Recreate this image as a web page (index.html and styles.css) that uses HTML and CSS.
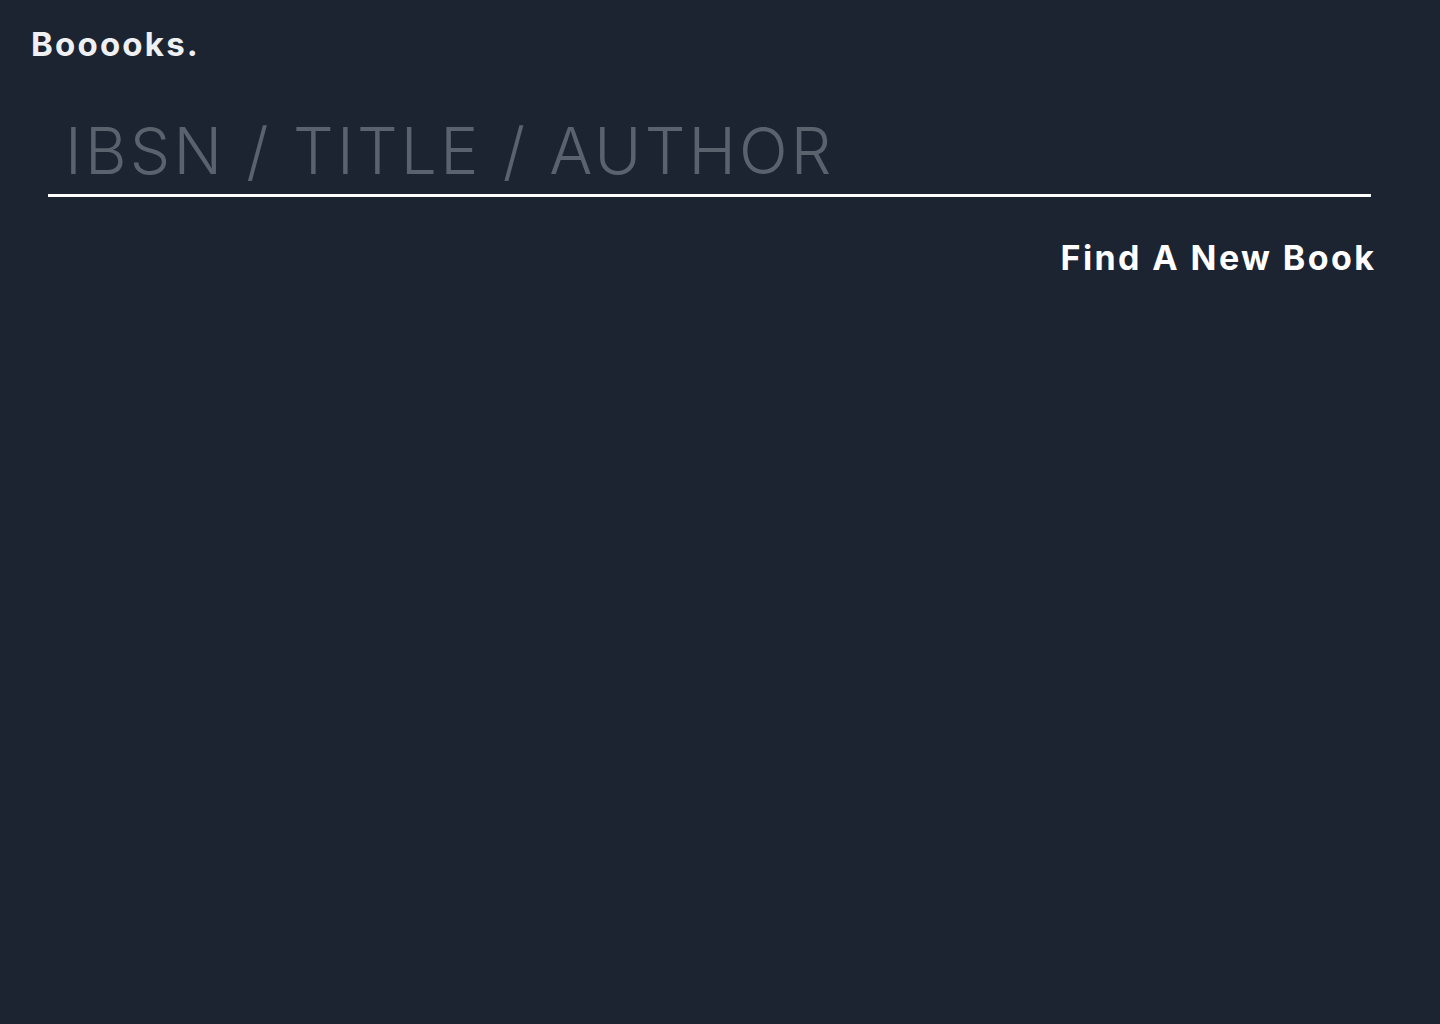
FILE: index.html
```html
<!DOCTYPE html>
<html>
<head>
<meta charset="utf-8">
<link rel="stylesheet" href="styles.css">
</head>
<body>
<header class="header">
  <div class="logo">Booooks.</div>
</header>
<main class="main">
  <div class="search">
    <input class="search-input" type="text" placeholder="IBSN / TITLE / AUTHOR">
  </div>
  <div class="actions">
    <button class="find-btn">Find A New Book</button>
  </div>
</main>
</body>
</html>
```
FILE: styles.css
```css
html, body {
  margin: 0;
  padding: 0;
  height: 100%;
}
body {
  background: #1c2431;
  font-family: "Inter", "Liberation Sans", sans-serif;
  color: #ffffff;
}
.header {
  padding: 24px 31px 0;
}
.logo {
  font-size: 33px;
  font-weight: 700;
  letter-spacing: 2.2px;
  color: #eef0f3;
  line-height: 40px;
}
.main {
  padding: 49px 69px 0 48px;
}
.search {
  border-bottom: 3px solid #ffffff;
}
.search-input {
  display: block;
  width: 100%;
  box-sizing: border-box;
  background: transparent;
  border: none;
  outline: none;
  padding: 0 0 5px 17px;
  font-family: "Inter", "Liberation Sans", sans-serif;
  font-size: 64px;
  font-weight: 300;
  letter-spacing: 3.2px;
  line-height: 76px;
  color: #59626d;
}
.search-input::placeholder {
  color: #59626d;
  opacity: 1;
}
.actions {
  display: flex;
  justify-content: flex-end;
  margin-right: -3px;
  padding-top: 39px;
}
.find-btn {
  background: none;
  border: none;
  padding: 0;
  font-family: "Inter", "Liberation Sans", sans-serif;
  font-size: 34px;
  font-weight: 700;
  letter-spacing: 2.4px;
  margin-right: -2.4px;
  color: #ffffff;
  line-height: 44px;
  cursor: pointer;
}
```
